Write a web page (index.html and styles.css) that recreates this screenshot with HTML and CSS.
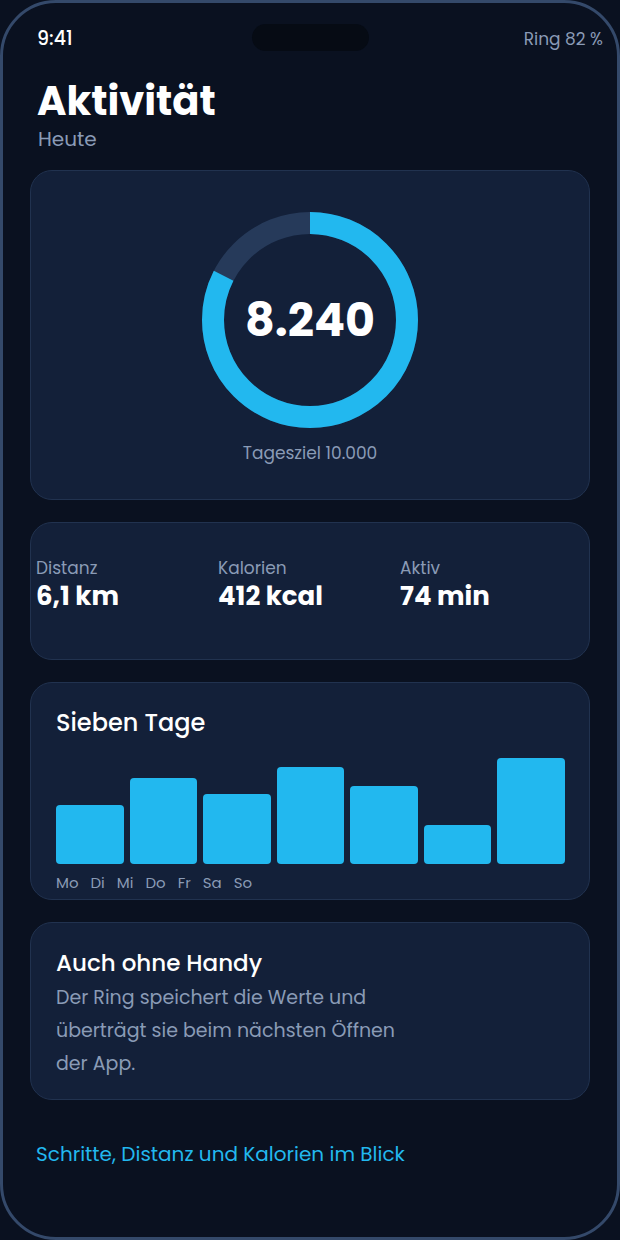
FILE: index.html
```html
<!DOCTYPE html>
<html lang="de">
<head>
    <meta charset="UTF-8">
    <meta name="viewport" content="width=device-width, initial-scale=1.0">
    <title>Aktivität</title>
    <link rel="stylesheet" href="styles.css">
</head>
<body>
    <div class="phone">
        <div class="notch"></div>

        <div class="status">
            <span class="time">9:41</span>
            <span class="battery">Ring 82 %</span>
        </div>

        <div class="head">
            <h1>Aktivität</h1>
            <p class="sub">Heute</p>
        </div>

        <div class="card ring-card">
            <div class="ring">
                <svg width="216" height="216" viewBox="0 0 216 216">
                    <circle cx="108" cy="108" r="97" fill="none" stroke="#263a5a" stroke-width="22"/>
                    <circle cx="108" cy="108" r="97" fill="none" stroke="#22b8ef" stroke-width="22"
                            stroke-dasharray="502.2 609.5" transform="rotate(-90 108 108)"/>
                </svg>
                <span class="steps">8.240</span>
            </div>
            <p class="goal">Tagesziel 10.000</p>
        </div>

        <div class="card stats">
            <div class="stat">
                <span class="label">Distanz</span>
                <span class="value">6,1 km</span>
            </div>
            <div class="stat">
                <span class="label">Kalorien</span>
                <span class="value">412 kcal</span>
            </div>
            <div class="stat">
                <span class="label">Aktiv</span>
                <span class="value">74 min</span>
            </div>
        </div>

        <div class="card week">
            <h2>Sieben Tage</h2>
            <div class="bars">
                <div class="bar" style="height: 59px"></div>
                <div class="bar" style="height: 86px"></div>
                <div class="bar" style="height: 70px"></div>
                <div class="bar" style="height: 97px"></div>
                <div class="bar" style="height: 78px"></div>
                <div class="bar" style="height: 39px"></div>
                <div class="bar" style="height: 106px"></div>
            </div>
            <div class="days">
                <span>Mo</span><span>Di</span><span>Mi</span><span>Do</span><span>Fr</span><span>Sa</span><span>So</span>
            </div>
        </div>

        <div class="card info">
            <h2>Auch ohne Handy</h2>
            <p>Der Ring speichert die Werte und überträgt sie beim nächsten Öffnen der App.</p>
        </div>

        <p class="footer">Schritte, Distanz und Kalorien im Blick</p>
    </div>
</body>
</html>
```

FILE: styles.css
```css
body {
    margin: 0;
    background: #0a1120;
    font-family: Poppins, "Open Sans", sans-serif;
    color: #fff;
}
.phone {
    position: relative;
    width: 620px;
    height: 1240px;
    box-sizing: border-box;
    border: 3px solid #34496a;
    border-radius: 56px;
    background: #0a1120;
    padding: 0 27px;
    overflow: hidden;
}
.notch {
    position: absolute;
    top: 21px;
    left: 249px;
    width: 117px;
    height: 27px;
    border-radius: 14px;
    background: #060b14;
}
.status {
    display: flex;
    justify-content: space-between;
    align-items: center;
    padding-top: 24px;
    margin: 0 -13px 0 7px;
    line-height: 24px;
}
.time {
    font-size: 19px;
    font-weight: 500;
}
.battery {
    font-size: 17px;
    color: #8a9bb6;
}
.head {
    margin: 26px 0 0 7px;
}
h1 {
    margin: 0;
    font-size: 40px;
    line-height: 48px;
    font-weight: 700;
}
.sub {
    margin: 1px 0 0 1px;
    font-size: 20px;
    line-height: 26px;
    color: #8a9bb6;
}
.card {
    box-sizing: border-box;
    background: #132039;
    border: 1px solid #21324f;
    border-radius: 22px;
    margin-bottom: 22px;
}
.ring-card {
    margin-top: 18px;
    height: 330px;
    padding-top: 41px;
    display: flex;
    flex-direction: column;
    align-items: center;
}
.ring {
    position: relative;
    width: 216px;
    height: 216px;
}
.ring svg {
    display: block;
}
.steps {
    position: absolute;
    inset: 0;
    display: flex;
    align-items: center;
    justify-content: center;
    font-size: 46px;
    font-weight: 700;
}
.goal {
    margin: 14px 0 0;
    font-size: 17px;
    line-height: 22px;
    color: #8a9bb6;
}
.stats {
    height: 138px;
    padding: 34px 0 0 5px;
    display: grid;
    grid-template-columns: repeat(3, 182px);
    align-content: start;
}
.stat {
    display: flex;
    flex-direction: column;
}
.label {
    font-size: 17px;
    line-height: 22px;
    color: #8a9bb6;
}
.value {
    margin-top: 1px;
    font-size: 26px;
    line-height: 32px;
    font-weight: 700;
}
.week {
    height: 218px;
    padding: 25px 24px 0 25px;
}
h2 {
    margin: 0;
    font-size: 24px;
    line-height: 30px;
    font-weight: 500;
}
.bars {
    margin-top: 20px;
    height: 106px;
    display: flex;
    align-items: flex-end;
    gap: 6px;
}
.bar {
    flex: 1;
    background: #22b8ef;
    border-radius: 4px;
}
.days {
    margin-top: 9px;
    display: flex;
    gap: 12px;
    font-size: 15px;
    line-height: 20px;
    color: #8a9bb6;
}
.info {
    height: 178px;
    padding: 25px 25px 0;
}
.info h2 {
    font-size: 23px;
}
.info p {
    margin: 3px 0 0;
    max-width: 345px;
    font-size: 19px;
    line-height: 33px;
    color: #8a9bb6;
}
.footer {
    margin: 41px 0 0 6px;
    font-size: 20px;
    line-height: 26px;
    color: #22b8ef;
}
```
